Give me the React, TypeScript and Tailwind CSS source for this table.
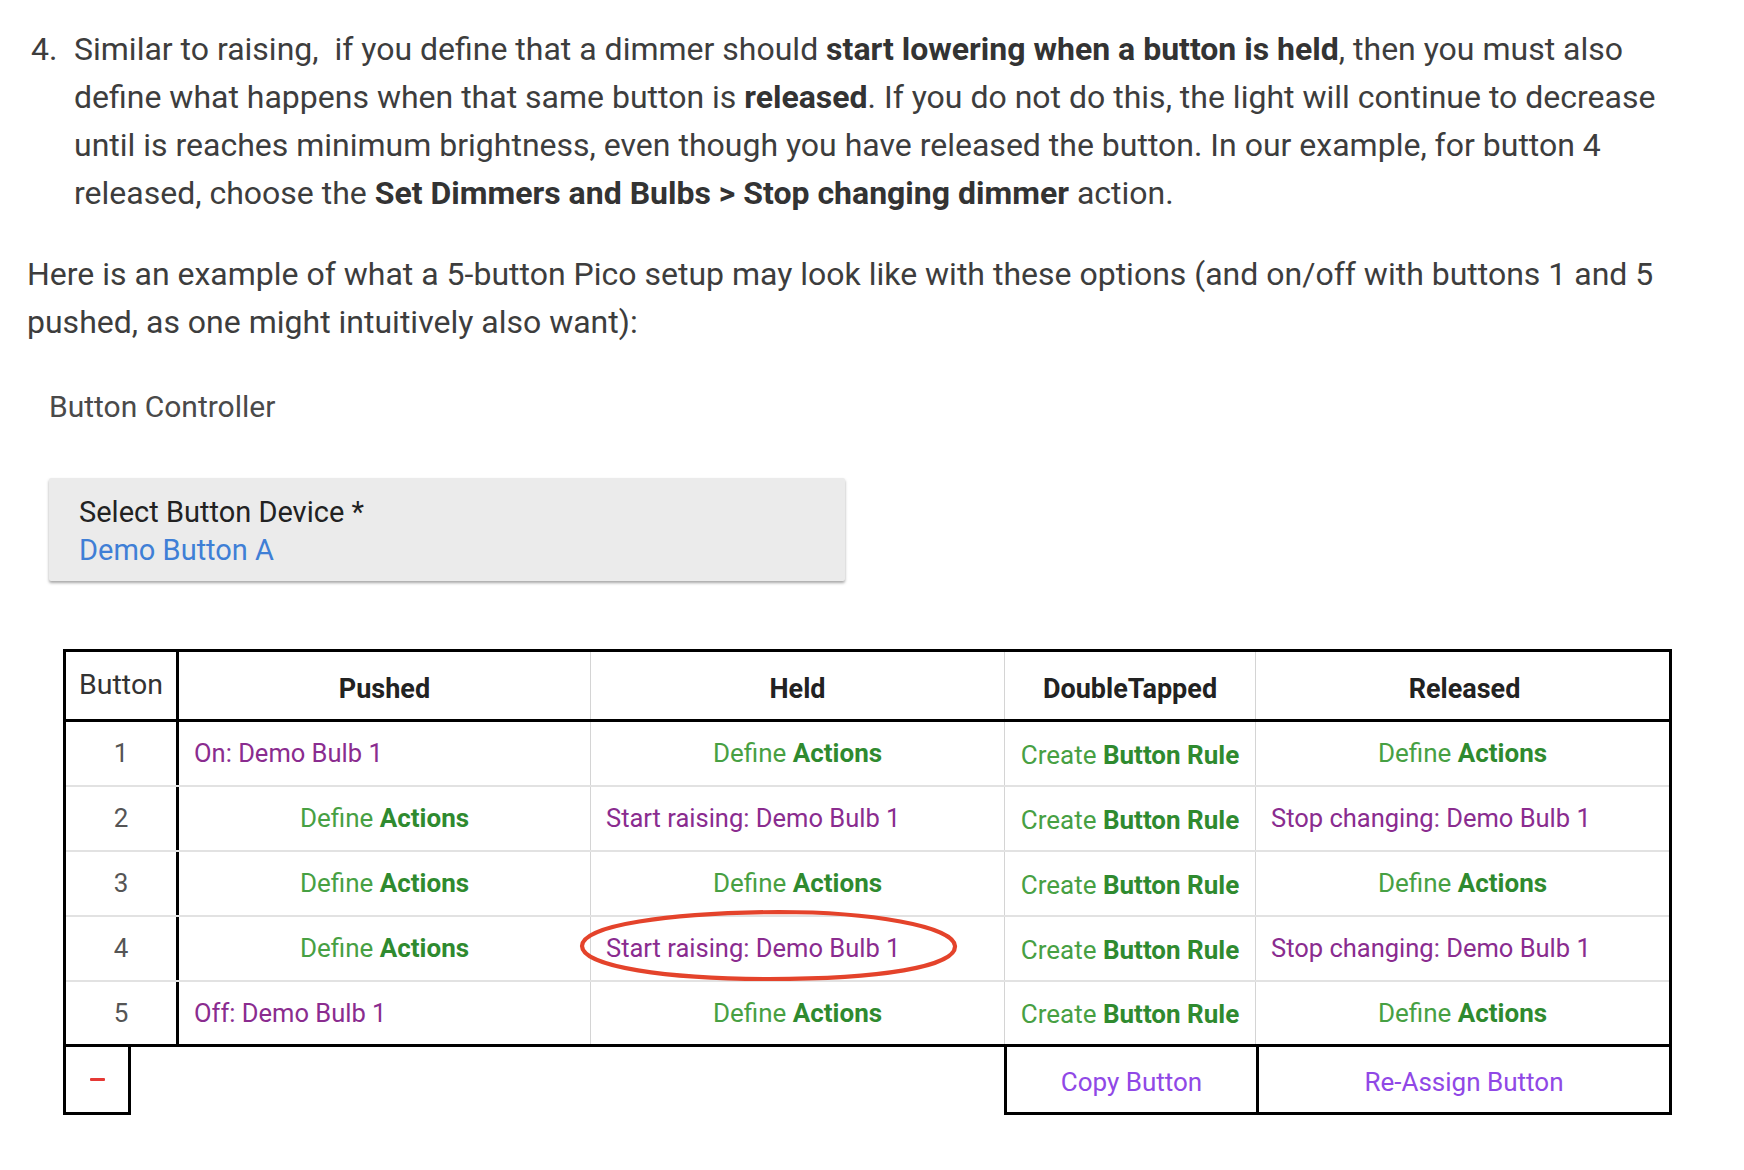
import React from "react";

const purple = "text-[#8a2c8f] text-[25.5px]";

function DefineActions() {
  return (
    <span className="text-[#47a043]">
      Define <span className="font-bold text-[#2f8a2f]">Actions</span>
    </span>
  );
}

function CreateRule() {
  return (
    <span className="text-[#47a043]">
      Create <span className="font-bold text-[#2f8a2f]">Button Rule</span>
    </span>
  );
}

type Cell = { kind: "define" } | { kind: "text"; text: string };

const rows: { n: number; pushed: Cell; held: Cell; released: Cell }[] = [
  { n: 1, pushed: { kind: "text", text: "On: Demo Bulb 1" }, held: { kind: "define" }, released: { kind: "define" } },
  { n: 2, pushed: { kind: "define" }, held: { kind: "text", text: "Start raising: Demo Bulb 1" }, released: { kind: "text", text: "Stop changing: Demo Bulb 1" } },
  { n: 3, pushed: { kind: "define" }, held: { kind: "define" }, released: { kind: "define" } },
  { n: 4, pushed: { kind: "define" }, held: { kind: "text", text: "Start raising: Demo Bulb 1" }, released: { kind: "text", text: "Stop changing: Demo Bulb 1" } },
  { n: 5, pushed: { kind: "text", text: "Off: Demo Bulb 1" }, held: { kind: "define" }, released: { kind: "define" } },
];

function CellView({ c, border }: { c: Cell; border: boolean }) {
  const b = border ? "border-r border-[#d4d4d4]" : "";
  if (c.kind === "define")
    return (
      <div className={`flex items-center justify-center ${b}`}>
        <DefineActions />
      </div>
    );
  return (
    <div className={`flex items-center pl-[15px] ${purple} ${b}`}>{c.text}</div>
  );
}

export default function App() {
  return (
    <div
      className="w-[1744px] h-[1170px] bg-white overflow-hidden text-[#3d3d3d]"
      style={{ fontFamily: "Roboto, 'Noto Sans', sans-serif" }}
    >
      {/* Paragraph 1 - ordered list item */}
      <div className="pt-[25px] pl-[31px] flex text-[32px] leading-[48px] whitespace-nowrap">
        <span className="w-[43px] shrink-0">4.</span>
        <div>
          Similar to raising,&nbsp; if you define that a dimmer should{" "}
          <b className="font-bold text-[#333]">start lowering when a button is held</b>, then you must also
          <br />
          define what happens when that same button is <b className="font-bold text-[#333]">released</b>. If you do
          not do this, the light will continue to decrease
          <br />
          until is reaches minimum brightness, even though you have released the button. In our example, for button 4
          <br />
          released, choose the{" "}
          <b className="font-bold text-[#333]">Set Dimmers and Bulbs &gt; Stop changing dimmer</b> action.
        </div>
      </div>

      {/* Paragraph 2 */}
      <div className="mt-[33px] pl-[27px] text-[32px] leading-[48px] whitespace-nowrap">
        Here is an example of what a 5-button Pico setup may look like with these options (and on/off with buttons 1 and 5
        <br />
        pushed, as one might intuitively also want):
      </div>

      {/* Button Controller title */}
      <div className="mt-[41px] pl-[49px] text-[30px] leading-[40px] text-[#4a4a4a]">Button Controller</div>

      {/* Select card */}
      <div className="mt-[51px] ml-[49px] w-[796px] h-[103px] bg-[#ebebeb] rounded-[2px] shadow-[0_2px_3px_rgba(0,0,0,0.35)] pl-[30px] pt-[15px]">
        <div className="text-[29px] leading-[38px] text-[#222]">Select Button Device *</div>
        <div className="text-[29px] leading-[38px] text-[#3f7fd6]">Demo Button A</div>
      </div>

      {/* Table */}
      <div className="relative mt-[68px] ml-[63px] w-[1609px] text-[26px]">
        <div className="border-[3px] border-black">
          {/* header */}
          <div className="grid grid-cols-[113px_412px_414px_251px_413px] h-[70px] border-b-[3px] border-black">
            <div className="flex items-start justify-center pt-[12px] border-r-[3px] border-black text-[28.5px] text-[#333]">
              Button
            </div>
            <div className="flex items-center justify-center pt-[7px] font-bold text-[27px] text-[#222] border-r border-[#d4d4d4]">Pushed</div>
            <div className="flex items-center justify-center pt-[7px] font-bold text-[27px] text-[#222] border-r border-[#d4d4d4]">Held</div>
            <div className="flex items-center justify-center pt-[7px] font-bold text-[27px] text-[#222] border-r border-[#d4d4d4]">DoubleTapped</div>
            <div className="flex items-center justify-center pt-[7px] pl-[4px] font-bold text-[27px] text-[#222]">Released</div>
          </div>
          {/* body */}
          {rows.map((r, i) => (
            <div
              key={r.n}
              className={`grid grid-cols-[113px_412px_414px_251px_413px] ${
                i < rows.length - 1 ? "h-[65px] border-b-2 border-[#e2e2e2]" : "h-[62px]"
              }`}
            >
              <div className="flex items-center justify-center border-r-[3px] border-black text-[#555]">{r.n}</div>
              <CellView c={r.pushed} border />
              <CellView c={r.held} border />
              <div className="flex items-center justify-center pt-[3px] border-r border-[#d4d4d4]">
                <CreateRule />
              </div>
              <CellView c={r.released} border={false} />
            </div>
          ))}
        </div>
        {/* footer */}
        <div className="flex h-[68px]">
          <div className="w-[68px] border-x-[3px] border-b-[3px] border-black flex items-center justify-center">
            <span className="block w-[15px] h-[3px] bg-[#e53935] rounded-[1px]" />
          </div>
          <div className="flex-1" />
          <div className="w-[252px] border-l-[3px] border-b-[3px] border-black flex items-center justify-center pt-[5px] text-[#9048e6]">
            Copy Button
          </div>
          <div className="w-[416px] border-x-[3px] border-b-[3px] border-black flex items-center justify-center pt-[5px] text-[#9048e6]">
            Re-Assign Button
          </div>
        </div>

        {/* red annotation ellipse */}
        <svg
          className="absolute left-[513px] top-[259px] pointer-events-none"
          width="385"
          height="76"
          viewBox="0 0 385 76"
        >
          <path
            d="M203 4 C 293 4, 378 18, 379 38 C 380 59, 303 71, 193 71 C 93 71, 6 59, 6 38 C 6 17, 93 5, 203 4 Z"
            fill="none"
            stroke="#e4432b"
            strokeWidth="4.2"
          />
        </svg>
      </div>
    </div>
  );
}
